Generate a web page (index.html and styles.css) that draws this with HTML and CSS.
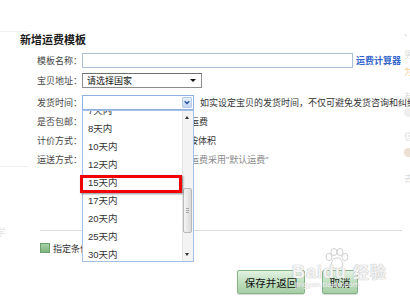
FILE: index.html
```html
<!DOCTYPE html>
<html lang="zh-CN">
<head>
    <meta charset="UTF-8">
    <title>新增运费模板</title>
    <link rel="stylesheet" href="styles.css">
</head>
<body>
    <div class="dialog">
        <h2 class="titulo">新增运费模板</h2>
        <div class="form">
            <div class="row">
                <span class="label">模板名称：</span>
                <input class="text-input" type="text" autocomplete="off">
                <a class="calc">运费计算器</a>
            </div>
            <div class="row r2">
                <span class="label">宝贝地址：</span>
                <div class="select plain">
                    <span>请选择国家</span>
                    <i class="caret"></i>
                </div>
            </div>
            <div class="row r3">
                <span class="label">发货时间：</span>
                <div class="select blue">
                    <b class="arrow-btn">
                        <svg width="9" height="9" viewBox="0 0 9 9"><path d="M2 3.2 L4.5 5.7 L7 3.2" fill="none" stroke="#1f4f9c" stroke-width="1.6"/></svg>
                    </b>
                </div>
                <span class="hint">如实设定宝贝的发货时间，不仅可避免发货咨询和纠纷</span>
            </div>
            <div class="row">
                <span class="label">是否包邮：</span>
                <span class="opts">
                    <span class="opt"><i class="radio"></i>自定义运费</span>
                    <span class="opt"><i class="radio"></i>卖家承担运费</span>
                </span>
            </div>
            <div class="row">
                <span class="label">计价方式：</span>
                <span class="opts wide">
                    <span class="opt"><i class="radio"></i>按件数</span>
                    <span class="opt"><i class="radio"></i>按重量</span>
                    <span class="opt"><i class="radio"></i>按体积</span>
                </span>
            </div>
            <div class="row">
                <span class="label">运送方式：</span>
                <span class="note">除指定地区外，其余地区的运费采用"默认运费"</span>
            </div>
        </div>
        <div class="divider"></div>
        <div class="check-row"><i class="checkbox"></i>指定条件包邮（可选）</div>
        <div class="actions">
            <button class="btn save">保存并返回</button>
            <button class="btn cancel">取消</button>
        </div>
    </div>

    <!-- lista desplegada del select de 发货时间 -->
    <div class="dropdown">
        <ul class="dd-list">
            <li>7天内</li>
            <li>8天内</li>
            <li>10天内</li>
            <li>12天内</li>
            <li>15天内</li>
            <li>17天内</li>
            <li>20天内</li>
            <li>25天内</li>
            <li>30天内</li>
        </ul>
        <div class="scrollbar">
            <i class="sb-up"></i>
            <div class="sb-thumb"></div>
            <i class="sb-down"></i>
        </div>
    </div>
    <div class="highlight"></div>

    <div class="bg-left">
        <div class="bg-line l1"></div>
        <div class="bg-line l2"></div>
        <span class="bg-char">学</span>
    </div>
    <div class="bg-right">
        <span class="c1">、</span>
        <span class="c2">男</span>
        <span class="c3">为</span>
        <span class="c4">有</span>
        <i class="dot d1"></i>
        <span class="c5">信</span>
        <i class="dot d2"></i>
        <span class="c6">去</span>
    </div>

    <div class="watermark">
        <svg class="paw" width="26" height="22" viewBox="0 0 26 22">
            <g fill="#fff" stroke="#d0d0d0" stroke-width="1">
                <ellipse cx="5" cy="9" rx="3" ry="3.6"/>
                <ellipse cx="10" cy="4" rx="3" ry="3.6"/>
                <ellipse cx="16" cy="4" rx="3" ry="3.6"/>
                <ellipse cx="21" cy="9" rx="3" ry="3.6"/>
                <path d="M13 10 C8 10 6 16 8 19 C10 21 16 21 18 19 C20 16 18 10 13 10 Z"/>
            </g>
        </svg>
        <span class="wm-main">Baidu<span class="wm-cn">经验</span></span>
        <span class="wm-url">jingyan.baidu.com</span>
    </div>
</body>
</html>
```

FILE: styles.css
```css
html, body {
    margin: 0;
    padding: 0;
}
body {
    width: 410px;
    height: 303px;
    overflow: hidden;
    position: relative;
    background: #fff;
    font-family: "Liberation Sans", "Noto Sans CJK SC", sans-serif;
    font-size: 9px;
    color: #333;
}
.dialog {
    padding-left: 20px;
}
.titulo {
    margin: 0;
    padding-top: 34px;
    height: 12px;
    line-height: 12px;
    font-size: 11px;
    font-weight: bold;
    color: #1a1a1a;
}
.form {
    margin-top: 5px;
}
.row {
    display: flex;
    align-items: center;
    height: 19px;
    white-space: nowrap;
}
.row.r2 {
    margin-top: 1px;
}
.row.r3 {
    margin-top: 3px;
}
.label {
    width: 62px;
    text-align: right;
    color: #444;
    flex: none;
}
.text-input {
    width: 271px;
    height: 15px;
    box-sizing: border-box;
    margin: 0;
    padding: 0 2px;
    border: 1px solid #a9bfd6;
    outline: none;
    font: inherit;
}
.calc {
    margin-left: 3px;
    color: #3366cc;
    font-weight: bold;
}
.select {
    height: 15px;
    box-sizing: border-box;
    display: flex;
    align-items: center;
    position: relative;
    background: #fff;
    flex: none;
}
.select.plain {
    width: 120px;
    border: 1px solid #8c8c8c;
    border-top-color: #6f6f6f;
    padding-left: 4px;
    color: #111;
}
.caret {
    position: absolute;
    right: 5px;
    top: 5px;
    width: 0;
    height: 0;
    border-left: 3px solid transparent;
    border-right: 3px solid transparent;
    border-top: 3px solid #111;
}
.select.blue {
    width: 112px;
    border: 1px solid #8eb2dd;
}
.arrow-btn {
    position: absolute;
    right: 1px;
    top: 1px;
    width: 10px;
    height: 11px;
    box-sizing: border-box;
    border: 1px solid #b5cbe8;
    border-radius: 1px;
    background: linear-gradient(#e6eefa, #c3d6f1);
    display: flex;
    align-items: center;
    justify-content: center;
}
.arrow-btn svg {
    display: block;
}
.hint {
    margin-left: 6px;
    color: #333;
}
.opts {
    display: flex;
    gap: 5px;
}
.opts.wide {
    gap: 10px;
}
.opt {
    display: flex;
    align-items: center;
}
.radio {
    width: 9px;
    height: 9px;
    box-sizing: border-box;
    border: 1px solid #888;
    border-radius: 50%;
    margin-right: 2px;
}
.note {
    color: #888;
}
.divider {
    margin: 61px 0 0 20px;
    width: 362px;
    border-top: 1px solid #dcdcdc;
}
.check-row {
    margin: 10px 0 0 20px;
    height: 14px;
    display: flex;
    align-items: center;
    color: #333;
}
.checkbox {
    width: 10px;
    height: 10px;
    box-sizing: border-box;
    border: 1px solid #6d9f6d;
    background: linear-gradient(#a7d0a7, #7fb57f);
    margin-right: 3px;
}
.actions {
    display: flex;
    gap: 17px;
    margin-top: 15px;
    padding-left: 217px;
}
.btn {
    height: 24px;
    box-sizing: border-box;
    margin: 0;
    padding: 0;
    border: 1px solid #86b386;
    border-radius: 2px;
    background: linear-gradient(#e2f2e2, #b9dcb9 60%, #a6cfa6);
    box-shadow: 0 1px 1px rgba(0, 0, 0, 0.15);
    font-family: "Liberation Sans", "Noto Sans CJK SC", sans-serif;
    font-size: 10.5px;
    color: #111;
}
.btn.save {
    width: 68px;
}
.btn.cancel {
    width: 36px;
}

/* lista desplegada */
.dropdown {
    position: absolute;
    left: 82px;
    top: 110px;
    width: 112px;
    height: 152px;
    box-sizing: border-box;
    border: 1px solid #a3c1e6;
    background: #fff;
    overflow: hidden;
}
.dd-list {
    margin: -9px 0 0;
    padding: 0;
    list-style: none;
}
.dd-list li {
    height: 18px;
    line-height: 18px;
    padding-left: 5px;
    font-size: 9.5px;
    color: #333;
}
.scrollbar {
    position: absolute;
    right: 0;
    top: 0;
    bottom: 0;
    width: 11px;
    box-sizing: border-box;
    background: #f3f3f3;
    border-left: 1px solid #e4e4e4;
}
.sb-up, .sb-down {
    position: absolute;
    left: 2px;
    width: 0;
    height: 0;
    border-left: 2.5px solid transparent;
    border-right: 2.5px solid transparent;
}
.sb-up {
    top: 5px;
    border-bottom: 3px solid #333;
}
.sb-down {
    bottom: 5px;
    border-top: 3px solid #333;
}
.sb-thumb {
    position: absolute;
    left: 0;
    right: 1px;
    top: 77px;
    height: 45px;
    box-sizing: border-box;
    border: 1px solid #b9b9b9;
    border-radius: 2px;
    background: linear-gradient(to right, #f5f5f5, #dadada);
}
.sb-thumb::after {
    content: "";
    position: absolute;
    left: 2px;
    right: 2px;
    top: 19px;
    height: 5px;
    background: repeating-linear-gradient(#a8a8a8 0 1px, transparent 1px 2px);
}
.highlight {
    position: absolute;
    left: 80px;
    top: 175px;
    width: 102px;
    height: 18px;
    box-sizing: border-box;
    border: 3px solid #f20000;
    box-shadow: 1px 1px 2px rgba(0, 0, 0, 0.45);
}

/* restos de la pagina de fondo */
.bg-left .bg-line {
    position: absolute;
    left: 0;
    width: 28px;
    border-top: 1px solid #efefef;
}
.bg-line.l1 {
    top: 31px;
}
.bg-line.l2 {
    top: 166px;
}
.bg-char {
    position: absolute;
    left: -4px;
    top: 224px;
    color: #e6e6e6;
    font-size: 10px;
}
.bg-right span, .bg-right .dot {
    position: absolute;
    left: 404px;
    color: #dcdcdc;
    font-size: 9px;
}
.bg-right .c1 { top: 26px; }
.bg-right .c2 { top: 48px; }
.bg-right .c3 { top: 65px; color: #f5d2a0; }
.bg-right .c4 { top: 90px; }
.bg-right .c5 { top: 130px; }
.bg-right .c6 { top: 172px; }
.bg-right .dot {
    width: 9px;
    height: 9px;
    border-radius: 50%;
    background: #eeeeee;
}
.bg-right .d1 { top: 108px; }
.bg-right .d2 { top: 148px; background: #ebdfd2; }

/* marca de agua */
.watermark {
    position: absolute;
    left: 290px;
    top: 248px;
    width: 100px;
    height: 45px;
    pointer-events: none;
}
.paw {
    position: absolute;
    left: 34px;
    top: 0;
}
.wm-main {
    position: absolute;
    left: 2px;
    top: 11px;
    font-size: 18px;
    font-weight: bold;
    color: rgba(255, 255, 255, 0.85);
    text-shadow: 0 0 1px #b8b8b8, 0 0 1px #b8b8b8;
    letter-spacing: 1px;
}
.wm-cn {
    margin-left: 6px;
    font-size: 16px;
}
.wm-url {
    position: absolute;
    left: 5px;
    top: 32px;
    font-size: 8px;
    color: rgba(255, 255, 255, 0.85);
    text-shadow: 0 0 1px #b8b8b8;
}
```
